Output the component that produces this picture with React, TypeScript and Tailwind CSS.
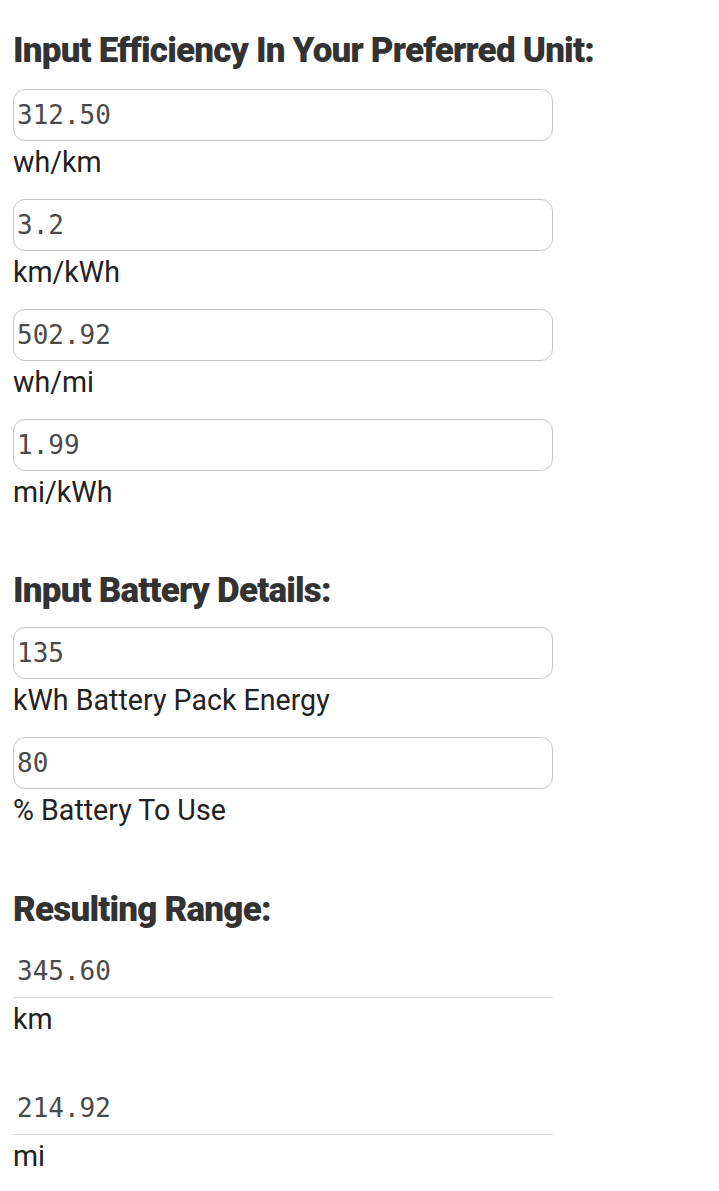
const efficiency = [
  { value: '312.50', unit: 'wh/km' },
  { value: '3.2', unit: 'km/kWh' },
  { value: '502.92', unit: 'wh/mi' },
  { value: '1.99', unit: 'mi/kWh' },
]

const battery = [
  { value: '135', unit: 'kWh Battery Pack Energy' },
  { value: '80', unit: '% Battery To Use' },
]

const results = [
  { value: '345.60', unit: 'km' },
  { value: '214.92', unit: 'mi' },
]

function Field({ value, unit }: { value: string; unit: string }) {
  return (
    <div className="pb-[19px]">
      <input
        readOnly
        value={value}
        className="block w-[540px] h-[52px] rounded-[12px] border border-[#c4c4c4] bg-white px-[3px] text-[26px] text-[#4a4a4a] font-['DejaVu_Sans_Mono',monospace] outline-none"
      />
      <div className="pt-[3px] text-[28.6px] leading-[36px] text-[#222]">{unit}</div>
    </div>
  )
}

export default function App() {
  return (
    <div className="pl-[13px] pt-[30px] pb-6 bg-white font-['Roboto',sans-serif]">
      <h2 className="mb-[17px] text-[35px] leading-[42px] font-black tracking-[-0.8px] text-[#333]">
        Input Efficiency In Your Preferred Unit:
      </h2>
      {efficiency.map((f) => (
        <Field key={f.unit} value={f.value} unit={f.unit} />
      ))}

      <h2 className="mt-[41px] mb-[15px] text-[35px] leading-[42px] font-black tracking-[-0.8px] text-[#333]">
        Input Battery Details:
      </h2>
      {battery.map((f) => (
        <Field key={f.unit} value={f.value} unit={f.unit} />
      ))}

      <h2 className="mt-[42px] mb-[15px] text-[35px] leading-[42px] font-black tracking-[-0.8px] text-[#333]">
        Resulting Range:
      </h2>
      {results.map((r) => (
        <div key={r.unit} className="pb-[46px]">
          <div className="flex items-center w-[540px] h-[52px] border-b border-[#d4d7db] px-[4px] text-[26px] text-[#4a4a4a] font-['DejaVu_Sans_Mono',monospace]">
            {r.value}
          </div>
          <div className="pt-[3px] text-[28.6px] leading-[36px] text-[#222]">{r.unit}</div>
        </div>
      ))}
    </div>
  )
}
